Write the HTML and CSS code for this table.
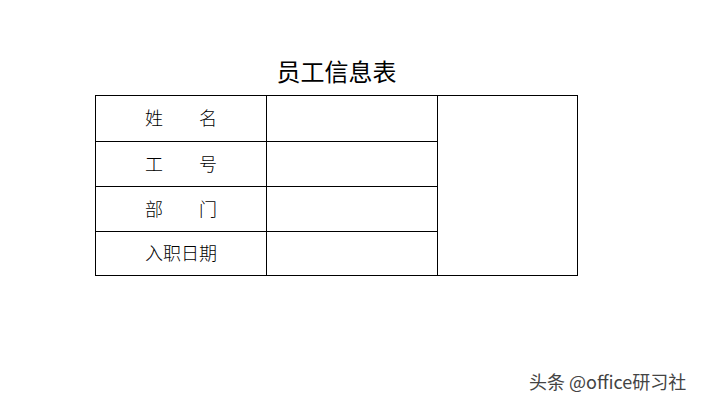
FILE: index.html
```html
<!DOCTYPE html>
<html lang="zh">
<head>
<meta charset="utf-8">
<title>员工信息表</title>
<link rel="stylesheet" href="styles.css">
</head>
<body>
<div class="sheet">
  <h1 class="title">员工信息表</h1>
  <div class="grid">
    <div class="cell label">姓　　名</div>
    <div class="cell"></div>
    <div class="cell photo"></div>
    <div class="cell label">工　　号</div>
    <div class="cell"></div>
    <div class="cell label">部　　门</div>
    <div class="cell"></div>
    <div class="cell label">入职日期</div>
    <div class="cell"></div>
  </div>
</div>
<div class="watermark">头条 @office研习社</div>
</body>
</html>
```
FILE: styles.css
```css
html, body {
  margin: 0;
  padding: 0;
  background: #fff;
}
body {
  width: 701px;
  height: 403px;
  position: relative;
  overflow: hidden;
  font-family: "Noto Sans CJK SC", "Noto Sans", sans-serif;
  color: #000;
}
.sheet {
  margin-left: 95px;
  padding-top: 55px;
  width: 483px;
}
.title {
  margin: 0;
  height: 40px;
  font-size: 24px;
  font-weight: 400;
  line-height: 32px;
  text-align: center;
}
.grid {
  display: grid;
  grid-template-columns: 170px 170px 139px;
  grid-template-rows: 45px 44px 44px 43px;
  gap: 1px;
  padding: 1px;
  background: #000;
  width: 481px;
}
.cell {
  background: #fff;
}
.photo {
  grid-column: 3;
  grid-row: 1 / span 4;
}
.label {
  display: flex;
  align-items: center;
  justify-content: center;
  font-size: 18px;
  font-weight: 300;
  line-height: 1;
  padding-bottom: 3px;
  box-sizing: border-box;
}
.watermark {
  position: absolute;
  left: 529px;
  top: 370px;
  font-size: 18px;
  line-height: 22px;
  color: #444;
  text-shadow: 0 0 1px #fff;
}
```
